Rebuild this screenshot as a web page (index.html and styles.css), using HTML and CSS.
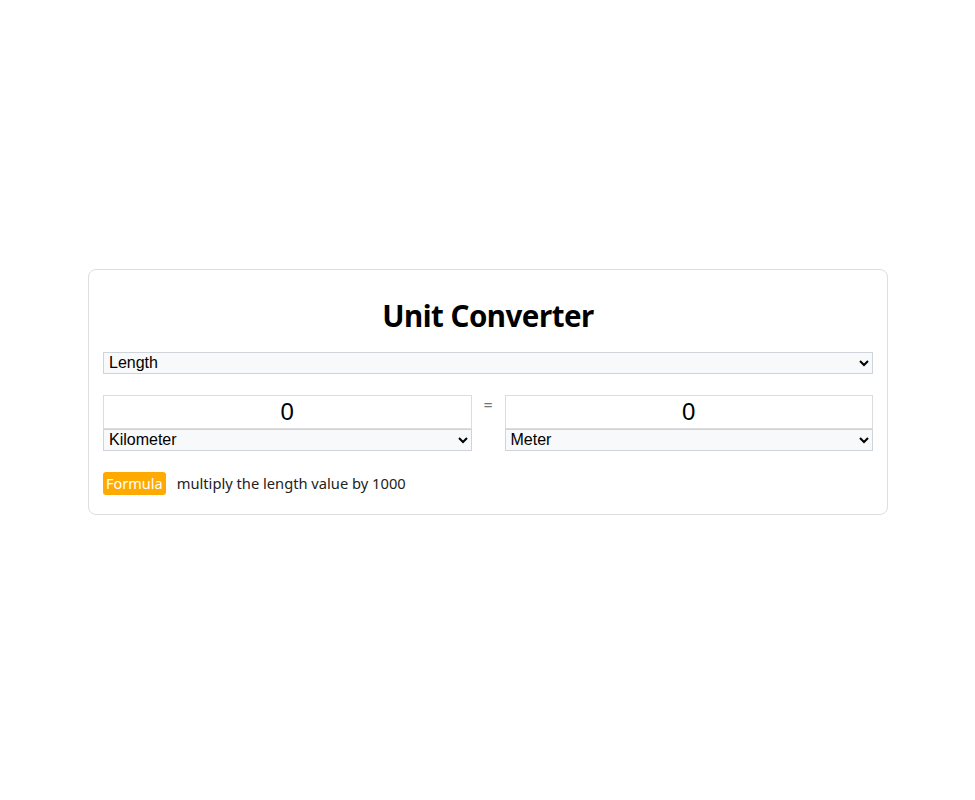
FILE: index.html
```html
<!DOCTYPE html>
<html>
<head>
<meta charset="utf-8">
<link rel="stylesheet" href="styles.css">
</head>
<body>
<div class="page">
  <div class="card">
    <h1 class="title">Unit Converter</h1>
    <select class="sel sel-type"><option>Length</option></select>
    <div class="row">
      <div class="col">
        <input class="num" type="text" value="0">
        <select class="sel"><option>Kilometer</option></select>
      </div>
      <div class="eq">=</div>
      <div class="col">
        <input class="num" type="text" value="0">
        <select class="sel"><option>Meter</option></select>
      </div>
    </div>
    <div class="formula">
      <span class="badge">Formula</span>
      <span class="ftext">multiply the length value by 1000</span>
    </div>
  </div>
</div>
</body>
</html>
```

FILE: styles.css
```css
html, body { margin: 0; padding: 0; background: #fff; }
.page {
  height: 800px;
  display: flex;
  align-items: center;
  justify-content: center;
  font-family: "Noto Sans", "Open Sans", sans-serif;
}
.card {
  box-sizing: border-box;
  width: 800px;
  margin-top: -17px;
  margin-left: 1px;
  border: 1px solid #dedede;
  border-radius: 8px;
  padding: 26px 14px 19px 14px;
  display: flex;
  flex-direction: column;
}
.title {
  margin: 0 0 16px 0;
  text-align: center;
  font-size: 29.5px;
  line-height: 40px;
  font-weight: 700;
  color: #000;
  letter-spacing: -0.5px;
}
.sel {
  box-sizing: border-box;
  width: 100%;
  height: 22px;
  margin: 0;
  font-family: "Liberation Sans", Arial, sans-serif;
  font-size: 16px;
  color: #000;
  background: #f8f9fa;
  border: 1px solid #ced4da;
  border-radius: 0;
  padding: 0 1px;
}
.sel-type { margin-bottom: 21px; }
.row {
  display: flex;
  align-items: flex-start;
}
.col {
  flex: 1;
  display: flex;
  flex-direction: column;
}
.num {
  box-sizing: border-box;
  width: 100%;
  height: 34px;
  margin: 0;
  font-family: "Liberation Sans", Arial, sans-serif;
  font-size: 24px;
  text-align: center;
  border: 1px solid #dcdcdc;
  border-radius: 0;
  padding: 0;
  color: #000;
  background: #fff;
}
.eq {
  width: 33px;
  text-align: center;
  color: #777;
  font-size: 16px;
  line-height: 20px;
}
.formula {
  margin-top: 21px;
  display: flex;
  align-items: center;
  gap: 11px;
}
.badge {
  background: #ffaa00;
  color: #fff;
  font-size: 14.5px;
  line-height: 23px;
  padding: 0 3px;
  border-radius: 3px;
}
.ftext {
  font-size: 14.7px;
  color: #222;
}
```
